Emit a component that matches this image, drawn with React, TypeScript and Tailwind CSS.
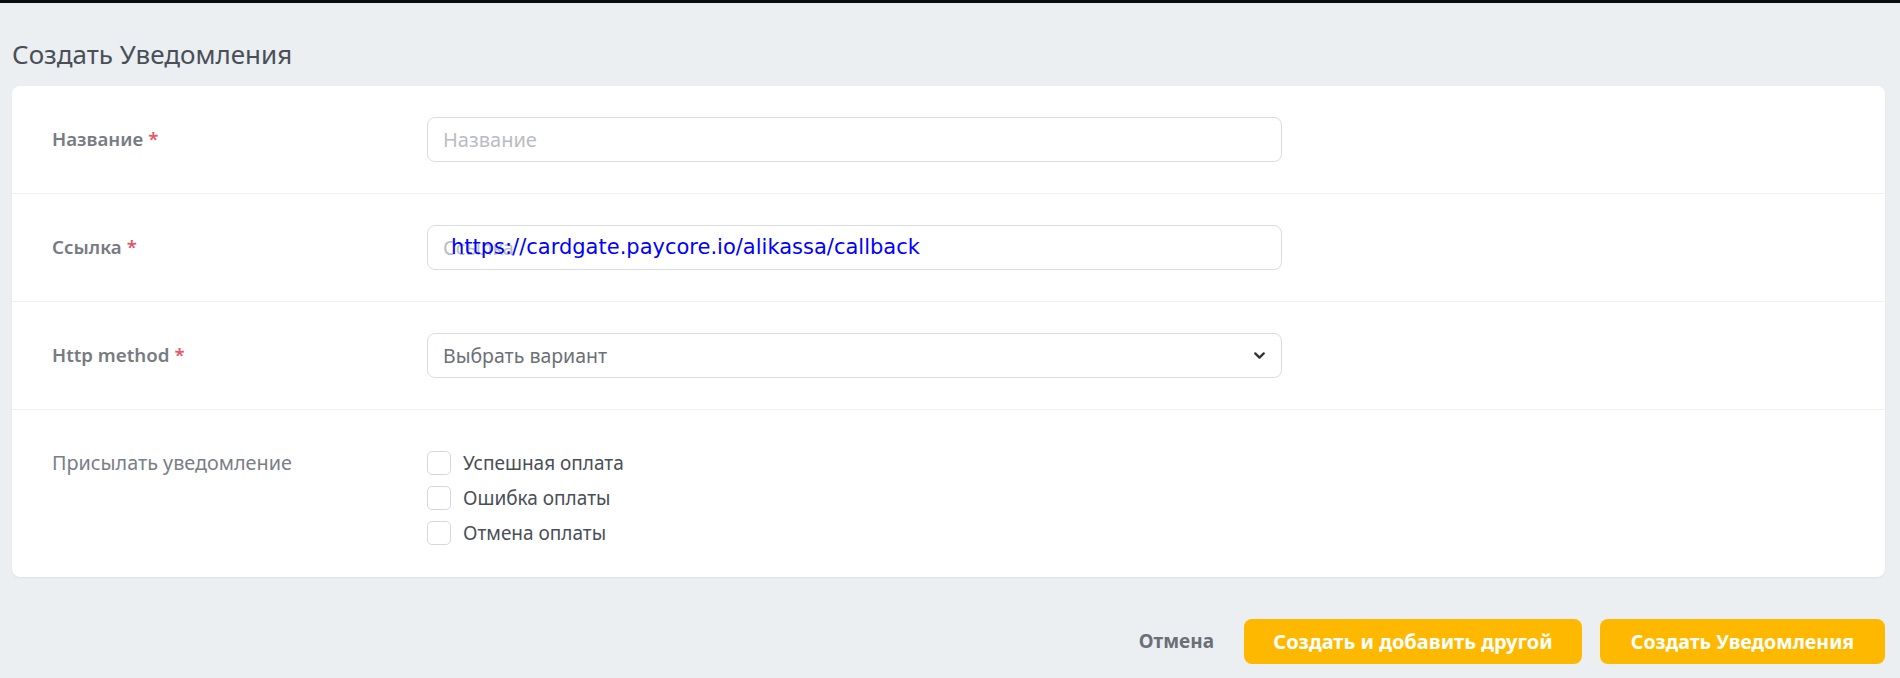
import React from "react";
import { ChevronDown } from "lucide-react";

const font = { fontFamily: "'Noto Sans', sans-serif" };

function Row({ label, required, children, last }: { label: string; required?: boolean; children: React.ReactNode; last?: boolean }) {
  return (
    <div className={`flex items-center pl-[40px] h-[108px] ${last ? "" : "border-b border-[#eef0f3]"}`}>
      <div className="w-[375px] shrink-0 text-[18.7px] font-semibold text-[#777b82]">
        {label}
        {required && <span className="text-[#e5586a] ml-[5px]">*</span>}
      </div>
      {children}
    </div>
  );
}

export default function App() {
  return (
    <div className="min-h-[678px] w-full bg-[#ebeff2] border-t-[3px] border-[#0b0b0b] pl-[12px] pr-[15px]" style={font}>
      <h1 className="text-[26px] leading-[32px] text-[#4a4f57] pt-[35px] pb-[16px] font-normal">Создать Уведомления</h1>
      <div className="bg-white rounded-[8px] shadow-[0_1px_2px_rgba(0,0,0,0.06)]">
        <Row label="Название" required>
          <input
            className="w-[855px] h-[45px] rounded-[8px] border border-[#d8dde3] px-[15px] text-[20px] placeholder:text-[#b9bdc3] outline-none"
            placeholder="Название"
            style={font}
          />
        </Row>
        <Row label="Ссылка" required>
          <div className="relative w-[855px] h-[45px]">
            <input
              className="w-full h-full rounded-[8px] border border-[#d8dde3] px-[15px] text-[20px] placeholder:text-[#b9bdc3] outline-none"
              placeholder="Ссылка"
              style={font}
            />
            <span
              className="absolute left-[24px] top-[10px] text-[21px] leading-[24px] text-[#0000ff]"
              style={{ fontFamily: "'DejaVu Sans', sans-serif" }}
            >
              https://cardgate.paycore.io/alikassa/callback
            </span>
          </div>
        </Row>
        <Row label="Http method" required>
          <div className="w-[855px] h-[45px] rounded-[8px] border border-[#d8dde3] pl-[15px] pr-[13px] flex items-center justify-between">
            <span className="text-[19.5px] text-[#6c7077]">Выбрать вариант</span>
            <ChevronDown size={17} strokeWidth={3.2} className="text-[#2f3237]" />
          </div>
        </Row>
        <div className="flex pl-[40px] pt-[41px] pb-[32px]">
          <div className="w-[375px] shrink-0 text-[19.8px] text-[#7a7e85] leading-[24px]">Присылать уведомление</div>
          <div className="flex flex-col gap-[11px]">
            {["Успешная оплата", "Ошибка оплаты", "Отмена оплаты"].map((t) => (
              <label key={t} className="flex items-center gap-[12px] h-[24px]">
                <span className="w-[24px] h-[24px] rounded-[5px] border border-[#d5d9de] bg-white" />
                <span className="text-[19px] text-[#4a4f57]">{t}</span>
              </label>
            ))}
          </div>
        </div>
      </div>
      <div className="flex justify-end items-center mt-[42px] gap-[18px]">
        <button className="text-[19px] font-bold text-[#6b6f76] mr-[12px]" style={font}>Отмена</button>
        <button className="w-[338px] h-[45px] rounded-[8px] bg-[#ffb800] text-white text-[20px] font-bold" style={font}>Создать и добавить другой</button>
        <button className="w-[285px] h-[45px] rounded-[8px] bg-[#ffb800] text-white text-[19.6px] font-bold" style={font}>Создать Уведомления</button>
      </div>
    </div>
  );
}
